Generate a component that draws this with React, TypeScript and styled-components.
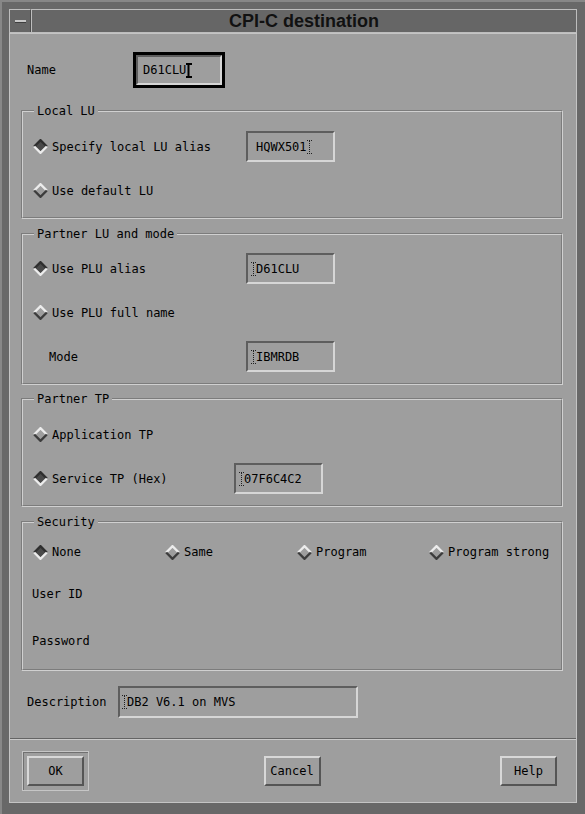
import React from 'react';
import styled, { createGlobalStyle } from 'styled-components';

const GlobalStyle = createGlobalStyle`
  html, body {
    margin: 0;
    padding: 0;
    background: #686868;
  }
  body {
    font-family: "DejaVu Sans Mono", "Liberation Mono", monospace;
    font-size: 12px;
    color: #000;
  }
  * {
    box-sizing: border-box;
  }
`;

const Window = styled.div`
  width: 585px;
  height: 814px;
  background: #686868;
  border-top: 2px solid #878787;
  border-left: 2px solid #878787;
  padding: 7px 8px 11px 7px;
  display: flex;
  flex-direction: column;
`;

const TitleBar = styled.div`
  display: flex;
  height: 24px;
  border-bottom: 1px solid #bdbdbd;
  background: #666666;
`;

const MinButton = styled.div`
  width: 22px;
  display: flex;
  align-items: center;
  justify-content: center;
  border-top: 1px solid #bdbdbd;
  border-left: 1px solid #bdbdbd;
  border-right: 1px solid #4c4c4c;
`;

const MinGlyph = styled.span`
  display: block;
  width: 11px;
  height: 2px;
  background: #c8c8c8;
  box-shadow: 0 1px 0 #3e3e3e;
`;

const TitleText = styled.div`
  flex: 1;
  display: flex;
  align-items: center;
  justify-content: center;
  border-top: 1px solid #bdbdbd;
  border-left: 1px solid #bdbdbd;
  border-right: 1px solid #bdbdbd;
  font-family: "Liberation Sans", Arial, sans-serif;
  font-weight: 700;
  font-size: 18px;
  color: #111;
`;

const Body = styled.div`
  flex: 1;
  display: flex;
  flex-direction: column;
  background: #9e9e9e;
  border: 1px solid #c4c4c4;
`;

const Form = styled.div`
  display: flex;
  flex-direction: column;
  padding: 18px 13px 20px 11px;
`;

const FieldRow = styled.div<{ $mt?: number }>`
  display: flex;
  align-items: center;
  padding-left: 6px;
  margin-top: ${({ $mt }) => $mt ?? 0}px;
`;

const FieldLabel = styled.span<{ $w: number }>`
  width: ${({ $w }) => $w}px;
  flex: 0 0 auto;
`;

const FocusRing = styled.div`
  border: 3px solid #000;
  display: flex;
`;

const TextBox = styled.div<{ $w: number; $h: number }>`
  width: ${({ $w }) => $w}px;
  height: ${({ $h }) => $h}px;
  display: flex;
  align-items: center;
  padding-left: ${({ $w }) => ($w > 100 ? 2 : 3)}px;
  border-top: 2px solid #5e5e5e;
  border-left: 2px solid #5e5e5e;
  border-bottom: 2px solid #d6d6d6;
  border-right: 2px solid #d6d6d6;
  white-space: pre;
  flex: 0 0 auto;
`;

const Group = styled.fieldset<{ $mt: number; $pt: number; $pb: number }>`
  margin: ${({ $mt }) => $mt}px 0 0;
  padding: ${({ $pt }) => $pt}px 10px ${({ $pb }) => $pb}px;
  border: 2px groove #d0d0d0;
  min-width: 0;
`;

const GroupTitle = styled.legend`
  padding: 0 3px;
  margin-left: 1px;
  line-height: 14px;
  font-size: 12px;
`;

const Rows = styled.div<{ $gap: number }>`
  display: flex;
  flex-direction: column;
  gap: ${({ $gap }) => $gap}px;
`;

const OptionRow = styled.div`
  display: flex;
  align-items: center;
  height: 31px;
`;

const Option = styled.label<{ $w?: number }>`
  display: flex;
  align-items: center;
  gap: 4px;
  width: ${({ $w }) => ($w ? `${$w}px` : 'auto')};
  flex: 0 0 auto;
  white-space: pre;
`;

const PlainLabel = styled.span<{ $indent: number; $w?: number }>`
  margin-left: ${({ $indent }) => $indent}px;
  width: ${({ $w }) => ($w ? `${$w}px` : 'auto')};
  flex: 0 0 auto;
`;

const SecurityGrid = styled.div`
  display: grid;
  grid-template-columns: repeat(4, 132px);
  align-items: center;
  height: 20px;
`;

const DiamondSvg = styled.svg`
  display: block;
  flex: 0 0 auto;
`;

const Separator = styled.div`
  border-top: 1px solid #646464;
  border-bottom: 1px solid #cacaca;
`;

const ButtonBar = styled.div`
  display: flex;
  justify-content: space-between;
  padding: 11px 14px 11px 12px;
`;

const ButtonSlot = styled.div<{ $default?: boolean }>`
  padding: 4px;
  border: 1px solid ${({ $default }) => ($default ? '#c6c6c6' : 'transparent')};
  box-shadow: ${({ $default }) => ($default ? 'inset 1px 1px 0 #707070' : 'none')};
`;

const PushButton = styled.button`
  width: 57px;
  height: 30px;
  background: #9e9e9e;
  font-family: "DejaVu Sans Mono", "Liberation Mono", monospace;
  font-size: 12px;
  color: #000;
  padding: 0;
  border-top: 2px solid #d8d8d8;
  border-left: 2px solid #d8d8d8;
  border-bottom: 2px solid #555555;
  border-right: 2px solid #555555;
  display: block;
`;

const CaretSvg = styled.svg<{ $before?: boolean }>`
  display: block;
  flex: 0 0 auto;
  margin-right: ${({ $before }) => ($before ? -1 : 0)}px;
`;

// radio indicator: sunken dark diamond when chosen, raised when not
const Diamond = ({ on }: { on: boolean }) => (
  <DiamondSvg width="15" height="15" viewBox="0 0 15 15">
    <polygon points="7.5,1 14,7.5 7.5,14 1,7.5" fill={on ? '#4a4a4a' : '#9e9e9e'} />
    <polyline points="1.2,7.5 7.5,1.2 13.8,7.5" fill="none" stroke={on ? '#2e2e2e' : '#ececec'} strokeWidth="2.4" />
    <polyline points="1.2,7.5 7.5,13.8 13.8,7.5" fill="none" stroke={on ? '#ececec' : '#3c3c3c'} strokeWidth="2.4" />
  </DiamondSvg>
);

// text cursor: solid one in the focused field, stippled elsewhere
const Caret = ({ active, before }: { active?: boolean; before?: boolean }) =>
  active ? (
    <CaretSvg width="6" height="15" viewBox="0 0 6 15">
      <path d="M0 1 H6 M0 14 H6" stroke="#000" strokeWidth="2" />
      <path d="M2.5 1 V14" stroke="#000" strokeWidth="2" />
    </CaretSvg>
  ) : (
    <CaretSvg $before={before} width="6" height="14" viewBox="0 0 6 14">
      <path d="M0 0.5 H5 M0 13.5 H5 M2.5 1 V13" stroke="#202020" strokeWidth="1" strokeDasharray="1 1" />
    </CaretSvg>
  );

const Field = ({ value, w = 89, h = 31, caret }: { value: string; w?: number; h?: number; caret: 'before' | 'after' }) => (
  <TextBox $w={w} $h={h}>
    {caret === 'before' && <Caret before />}
    {caret === 'after' && <span style={{ marginLeft: 5 }} />}
    {value}
    {caret === 'after' && <Caret />}
  </TextBox>
);

export default function App() {
  return (
    <>
      <GlobalStyle />
      <Window>
        <TitleBar>
          <MinButton>
            <MinGlyph />
          </MinButton>
          <TitleText>CPI-C destination</TitleText>
        </TitleBar>
        <Body>
          <Form>
            <FieldRow>
              <FieldLabel $w={106}>Name</FieldLabel>
              <FocusRing>
                <TextBox $w={86} $h={30}>
                  <span style={{ marginLeft: 2 }} />
                  D61CLU
                  <Caret active />
                </TextBox>
              </FocusRing>
            </FieldRow>

            <Group $mt={16} $pt={13} $pb={11}>
              <GroupTitle>Local LU</GroupTitle>
              <Rows $gap={13}>
                <OptionRow>
                  <Option $w={213}>
                    <Diamond on />
                    Specify local LU alias
                  </Option>
                  <Field value="HQWX501" caret="after" />
                </OptionRow>
                <OptionRow>
                  <Option>
                    <Diamond on={false} />
                    Use default LU
                  </Option>
                </OptionRow>
              </Rows>
            </Group>

            <Group $mt={8} $pt={12} $pb={11}>
              <GroupTitle>Partner LU and mode</GroupTitle>
              <Rows $gap={13}>
                <OptionRow>
                  <Option $w={213}>
                    <Diamond on />
                    Use PLU alias
                  </Option>
                  <Field value="D61CLU" caret="before" />
                </OptionRow>
                <OptionRow>
                  <Option>
                    <Diamond on={false} />
                    Use PLU full name
                  </Option>
                </OptionRow>
                <OptionRow>
                  <PlainLabel $indent={16} $w={197}>
                    Mode
                  </PlainLabel>
                  <Field value="IBMRDB" caret="before" />
                </OptionRow>
              </Rows>
            </Group>

            <Group $mt={7} $pt={13} $pb={11}>
              <GroupTitle>Partner TP</GroupTitle>
              <Rows $gap={13}>
                <OptionRow>
                  <Option>
                    <Diamond on={false} />
                    Application TP
                  </Option>
                </OptionRow>
                <OptionRow>
                  <Option $w={201}>
                    <Diamond on />
                    Service TP (Hex)
                  </Option>
                  <Field value="07F6C4C2" caret="before" />
                </OptionRow>
              </Rows>
            </Group>

            <Group $mt={8} $pt={13} $pb={13}>
              <GroupTitle>Security</GroupTitle>
              <Rows $gap={16}>
                <SecurityGrid>
                  <Option>
                    <Diamond on />
                    None
                  </Option>
                  <Option>
                    <Diamond on={false} />
                    Same
                  </Option>
                  <Option>
                    <Diamond on={false} />
                    Program
                  </Option>
                  <Option>
                    <Diamond on={false} />
                    Program strong
                  </Option>
                </SecurityGrid>
                <OptionRow>
                  <PlainLabel $indent={-1}>User ID</PlainLabel>
                </OptionRow>
                <OptionRow>
                  <PlainLabel $indent={-1}>Password</PlainLabel>
                </OptionRow>
              </Rows>
            </Group>

            <FieldRow $mt={15}>
              <FieldLabel $w={91}>Description</FieldLabel>
              <Field value="DB2 V6.1 on MVS" w={240} h={32} caret="before" />
            </FieldRow>
          </Form>
          <Separator />
          <ButtonBar>
            <ButtonSlot $default>
              <PushButton>OK</PushButton>
            </ButtonSlot>
            <ButtonSlot>
              <PushButton>Cancel</PushButton>
            </ButtonSlot>
            <ButtonSlot>
              <PushButton>Help</PushButton>
            </ButtonSlot>
          </ButtonBar>
        </Body>
      </Window>
    </>
  );
}
